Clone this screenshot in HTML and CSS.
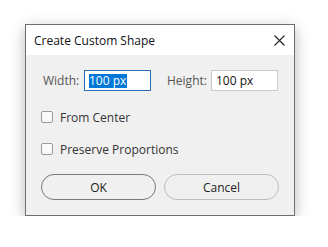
FILE: index.html
```html
<!DOCTYPE html>
<html lang="en">
<head>
    <meta charset="UTF-8">
    <title>Create Custom Shape</title>
    <link rel="stylesheet" href="styles.css">
</head>
<body>
    <div class="dialog">
        <div class="titleBar">
            <span class="title">Create Custom Shape</span>
            <svg class="close" width="11" height="11" viewBox="0 0 11 11">
                <path d="M0.5 0.5 L10.5 10.5 M10.5 0.5 L0.5 10.5" stroke="#222" stroke-width="1.1" fill="none"/>
            </svg>
        </div>

        <div class="content">
            <div class="sizeRow">
                <span class="label widthLabel">Width:</span>
                <div class="field active"><span class="sel">100 px</span></div>
                <span class="label heightLabel">Height:</span>
                <div class="field">100 px</div>
            </div>

            <label class="check first">
                <span class="box"></span>
                <span>From Center</span>
            </label>
            <label class="check">
                <span class="box"></span>
                <span>Preserve Proportions</span>
            </label>

            <div class="buttons">
                <button class="btn ok">OK</button>
                <button class="btn">Cancel</button>
            </div>
        </div>
    </div>
</body>
</html>
```

FILE: styles.css
```css
*{
    margin: 0;
    box-sizing: border-box;
}

body{
    background: #fff;
    padding: 24px 0 0 25px;
    font-family: 'Open Sans', 'Noto Sans', sans-serif;
    font-size: 12px;
}

.dialog{
    width: 270px;
    height: 192px;
    border: 1px solid #6e6e6e;
    background: #f0f0f0;
    box-shadow: 0 4px 14px rgba(0, 0, 0, 0.28);
}

.titleBar{
    height: 30px;
    background: #fff;
    display: flex;
    align-items: center;
    justify-content: space-between;
    padding: 0 9px 0 8px;
}

.title{
    color: #111;
    font-size: 12px;
}

.content{
    padding: 15px 15px 0 15px;
}

/* size fields */
.sizeRow{
    display: flex;
    align-items: center;
    height: 21px;
}

.label{
    color: #555;
}

.widthLabel{
    width: 43px;
    padding-left: 2px;
}

.heightLabel{
    width: 44px;
    margin-left: 16px;
}

.field{
    width: 67px;
    height: 21px;
    border: 1px solid #c9c9c9;
    background: #fff;
    color: #111;
    padding-left: 4px;
    line-height: 19px;
}

.field.active{
    border-color: #2d6db3;
}

.sel{
    background: #0078d7;
    color: #fff;
    display: inline-block;
    line-height: 14px;
    padding-right: 1px;
}

/* checkboxes */
.check{
    display: flex;
    align-items: center;
    gap: 7px;
    height: 20px;
    margin-top: 12px;
    color: #333;
}

.check.first{
    margin-top: 16px;
}

.box{
    width: 12px;
    height: 12px;
    border: 1px solid #9a9a9a;
    border-radius: 2px;
    background: #fafafa;
}

/* buttons */
.buttons{
    display: flex;
    gap: 8px;
    margin-top: 15px;
}

.btn{
    width: 115px;
    height: 26px;
    border: 1px solid #bdbdbd;
    border-radius: 13px;
    background: #f0f0f0;
    color: #222;
    font-family: inherit;
    font-size: 12px;
}

.btn.ok{
    border-color: #7a7a7a;
}
```
